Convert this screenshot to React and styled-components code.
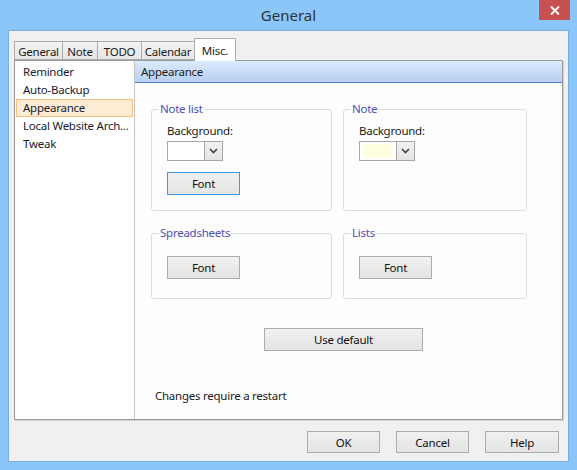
import React from 'react'
import styled, { createGlobalStyle } from 'styled-components'

const Global = createGlobalStyle`
  html, body {
    margin: 0;
    padding: 0;
    background: #8bc6f8;
  }
  * {
    box-sizing: border-box;
  }
`

const FONT = `"Noto Sans", "Open Sans", "Liberation Sans", sans-serif`

const Window = styled.div`
  width: 577px;
  height: 470px;
  background: #8bc6f8;
  display: flex;
  flex-direction: column;
  font-family: ${FONT};
  font-size: 11.5px;
  letter-spacing: -0.25px;
  color: #1b1b1b;
  overflow: hidden;
`

const TitleBar = styled.div`
  height: 30px;
  display: grid;
  grid-template-columns: 1fr auto 1fr;
  align-items: center;
`

const Title = styled.div`
  grid-column: 2;
  font-size: 15px;
  color: #333;
  letter-spacing: 0;
`

const CloseBtn = styled.div`
  grid-column: 3;
  justify-self: end;
  align-self: start;
  width: 31px;
  height: 20px;
  margin-right: 7px;
  background: #c75050;
  display: flex;
  align-items: center;
  justify-content: center;
`

const Client = styled.div`
  flex: 1;
  margin: 0 8px 8px 8px;
  background: #f0f0f0;
  border: 1px solid #78aee0;
  padding: 7px 5px 8px 5px;
  display: flex;
  flex-direction: column;
`

const TabStrip = styled.div`
  height: 22px;
  display: flex;
  align-items: flex-end;
  position: relative;
  z-index: 1;
`

const Tab = styled.div`
  width: ${p => p.$w}px;
  height: ${p => (p.$active ? 23 : 19)}px;
  margin-bottom: ${p => (p.$active ? -1 : 0)}px;
  margin-left: -1px;
  border: 1px solid #acacac;
  border-bottom: ${p => (p.$active ? 'none' : '1px solid #acacac')};
  background: ${p => (p.$active ? '#ffffff' : 'linear-gradient(#f2f2f2, #e6e6e6)')};
  display: flex;
  align-items: center;
  justify-content: center;
  padding-top: ${p => (p.$active ? 0 : 1)}px;
  color: #1b1b1b;
  &:first-child {
    margin-left: 0;
  }
`

const TabPanel = styled.div`
  height: 360px;
  border: 1px solid #9a9a9a;
  box-shadow: 1px 1px 0 #d2d2d2;
  background: #ffffff;
  display: flex;
`

const Sidebar = styled.div`
  width: 120px;
  border-right: 1px solid #c4c4c4;
  background: #ffffff;
  padding: 2px 1px;
  display: flex;
  flex-direction: column;
`

const NavItem = styled.div`
  height: 18px;
  line-height: 16px;
  padding-left: 6px;
  border: 1px solid ${p => (p.$active ? '#f4c083' : 'transparent')};
  background: ${p => (p.$active ? '#fdebd3' : 'transparent')};
  white-space: nowrap;
  color: #1a1a30;
`

const Content = styled.div`
  flex: 1;
  display: flex;
  flex-direction: column;
  background: #fdfdfd;
`

const Header = styled.div`
  height: 22px;
  padding-left: 6px;
  display: flex;
  align-items: center;
  background: linear-gradient(#dceafd, #b7cff2);
  border-bottom: 1px solid #4f80cf;
  color: #1b1b1b;
`

const Body = styled.div`
  flex: 1;
  padding: 19px 34px 0 16px;
  display: flex;
  flex-direction: column;
`

const GroupGrid = styled.div`
  display: grid;
  grid-template-columns: 181px 184px;
  column-gap: 11px;
  row-gap: 15px;
`

const Group = styled.fieldset`
  margin: 0;
  min-width: 0;
  height: ${p => p.$h}px;
  border: 1px solid #dcdcdc;
  border-radius: 3px;
  padding: 0 0 0 15px;
  display: flex;
  flex-direction: column;
  align-items: flex-start;
`

const Legend = styled.legend`
  margin-left: -8px;
  padding: 0 1px;
  line-height: 14px;
  color: #4c50b4;
`

const Label = styled.div`
  margin-top: 7px;
  line-height: 16px;
`

const Combo = styled.div`
  width: 56px;
  height: 20px;
  margin-top: 2px;
  border: 1px solid #a6a6a6;
  background: #ffffff;
  display: flex;
`

const Swatch = styled.div`
  flex: 1;
  margin: 2px 4px 2px 3px;
  background: ${p => p.$color || 'transparent'};
`

const ComboArrow = styled.div`
  width: 18px;
  border-left: 1px solid #a6a6a6;
  background: linear-gradient(#f2f2f2, #e4e4e4);
  display: flex;
  align-items: center;
  justify-content: center;
`

const Button = styled.div`
  width: ${p => p.$w || 73}px;
  height: ${p => p.$h || 23}px;
  margin-top: ${p => p.$mt || 0}px;
  border: 1px solid ${p => (p.$focus ? '#3d9ae9' : '#acacac')};
  background: linear-gradient(#f0f0f0, #e4e4e4);
  display: flex;
  align-items: center;
  justify-content: center;
  color: #111;
  flex-shrink: 0;
`

const DefaultRow = styled.div`
  margin-top: 29px;
  padding-left: 113px;
  display: flex;
`

const Note = styled.div`
  margin-top: 37px;
  padding-left: 4px;
  line-height: 16px;
`

const ButtonRow = styled.div`
  margin-top: 11px;
  padding-right: 4px;
  display: flex;
  justify-content: flex-end;
  gap: 16px;
`

const Chevron = () => (
  <svg width="9" height="6" viewBox="0 0 9 6">
    <path d="M1 1 L4.5 4.5 L8 1" fill="none" stroke="#444" strokeWidth="1.6" />
  </svg>
)

const CloseIcon = () => (
  <svg width="10" height="9" viewBox="0 0 10 9">
    <path d="M1 0.5 L9 8.5 M9 0.5 L1 8.5" stroke="#fff" strokeWidth="2" />
  </svg>
)

const ColorCombo = ({ color }) => (
  <Combo>
    <Swatch $color={color} />
    <ComboArrow>
      <Chevron />
    </ComboArrow>
  </Combo>
)

const tabs = [
  { label: 'General', w: 49 },
  { label: 'Note', w: 36 },
  { label: 'TODO', w: 45 },
  { label: 'Calendar', w: 54 },
  { label: 'Misc.', w: 42, active: true },
]

const navItems = ['Reminder', 'Auto-Backup', 'Appearance', 'Local Website Arch...', 'Tweak']

export default function App() {
  return (
    <>
      <Global />
      <Window>
        <TitleBar>
          <Title>General</Title>
          <CloseBtn>
            <CloseIcon />
          </CloseBtn>
        </TitleBar>
        <Client>
          <TabStrip>
            {tabs.map(t => (
              <Tab key={t.label} $w={t.w} $active={t.active}>
                {t.label}
              </Tab>
            ))}
          </TabStrip>
          <TabPanel>
            <Sidebar>
              {navItems.map(n => (
                <NavItem key={n} $active={n === 'Appearance'}>
                  {n}
                </NavItem>
              ))}
            </Sidebar>
            <Content>
              <Header>Appearance</Header>
              <Body>
                <GroupGrid>
                  <Group $h={109}>
                    <Legend>Note list</Legend>
                    <Label>Background:</Label>
                    <ColorCombo />
                    <Button $focus $mt={11}>Font</Button>
                  </Group>
                  <Group $h={109}>
                    <Legend>Note</Legend>
                    <Label>Background:</Label>
                    <ColorCombo color="#ffffdf" />
                  </Group>
                  <Group $h={73}>
                    <Legend>Spreadsheets</Legend>
                    <Button $mt={16}>Font</Button>
                  </Group>
                  <Group $h={73}>
                    <Legend>Lists</Legend>
                    <Button $mt={16}>Font</Button>
                  </Group>
                </GroupGrid>
                <DefaultRow>
                  <Button $w={159}>Use default</Button>
                </DefaultRow>
                <Note>Changes require a restart</Note>
              </Body>
            </Content>
          </TabPanel>
          <ButtonRow>
            <Button $w={73} $h={22}>OK</Button>
            <Button $w={73} $h={22}>Cancel</Button>
            <Button $w={74} $h={22}>Help</Button>
          </ButtonRow>
        </Client>
      </Window>
    </>
  )
}
